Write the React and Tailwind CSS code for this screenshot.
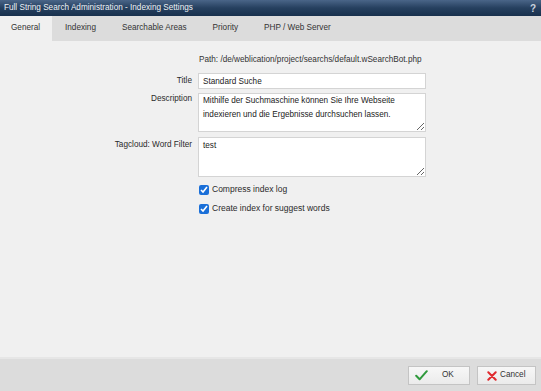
import React from "react";

const font = { fontFamily: '"Liberation Sans", Arial, sans-serif' };

function Row({ label, labelClass = "", className = "", children }) {
  return (
    <div className={"flex gap-[6px] " + className}>
      <div className={"w-[192px] shrink-0 text-right leading-[12px] " + labelClass}>{label}</div>
      {children}
    </div>
  );
}

function Check({ label, className = "" }) {
  return (
    <div className={"flex " + className}>
      <div className="w-[199px] shrink-0" />
      <label className="flex items-center gap-[3px] h-[13px] text-[8.5px]">
        <input type="checkbox" readOnly checked className="w-[10px] h-[10px] m-0 accent-[#1a6fd8]" />
        <span>{label}</span>
      </label>
    </div>
  );
}

export default function App() {
  return (
    <div
      className="w-[541px] h-[391px] flex flex-col bg-[#f0f0f0] text-[8.2px] text-[#2a2a2a] overflow-hidden"
      style={font}
    >
      {/* title bar */}
      <div className="h-[16px] shrink-0 flex items-center justify-between pl-[4px] pr-[5px] bg-gradient-to-b from-[#4a6588] via-[#26405f] to-[#18304d] text-[#eef2f6]">
        <span>Full String Search Administration - Indexing Settings</span>
        <span className="font-bold text-[10px] text-[#c9d3de]">?</span>
      </div>
      {/* tabs */}
      <div className="h-[25px] shrink-0 flex items-stretch bg-[#dcdcdc] text-[#333]">
        <div className="w-[52px] flex items-center pl-[11px] bg-[#f0f0f0]">General</div>
        <div className="flex items-center pl-[13px] gap-[26px]">
          <span>Indexing</span>
          <span>Searchable Areas</span>
          <span>Priority</span>
          <span>PHP / Web Server</span>
        </div>
      </div>
      {/* content */}
      <div className="flex-1 pt-[13px]">
        <div className="flex">
          <div className="w-[199px] shrink-0" />
          <div className="h-[12px] leading-[12px] text-[#333] whitespace-nowrap">
            Path: /de/weblication/project/searchs/default.wSearchBot.php
          </div>
        </div>

        <Row label="Title" className="mt-[7px] items-center">
          <input
            readOnly
            value="Standard Suche"
            className="h-[16px] w-[228px] bg-white border border-[#d4d4d4] px-[4px] text-[8.2px] text-[#222] outline-none"
            style={font}
          />
        </Row>

        <Row label="Description" className="mt-[4px] items-start">
          <textarea
            readOnly
            value="Mithilfe der Suchmaschine können Sie Ihre Webseite indexieren und die Ergebnisse durchsuchen lassen."
            className="block h-[39px] w-[228px] bg-white border border-[#d4d4d4] px-[4px] pt-[0px] pb-0 text-[8.2px] leading-[14px] text-[#222] outline-none resize-y"
            style={font}
          />
        </Row>

        <Row label="Tagcloud: Word Filter" labelClass="pt-[2px]" className="mt-[5px] items-start">
          <textarea
            readOnly
            value="test"
            className="block h-[40px] w-[228px] bg-white border border-[#d4d4d4] px-[4px] pt-[1px] pb-0 text-[8.2px] leading-[14px] text-[#222] outline-none resize-y"
            style={font}
          />
        </Row>

        <Check label="Compress index log" className="mt-[6px]" />
        <Check label="Create index for suggest words" className="mt-[6px]" />
      </div>
      {/* footer */}
      <div className="h-[34px] shrink-0 bg-[#dcdcdc] border-t-2 border-[#e6e6e6] flex items-center justify-end gap-[7px] pr-[5px] pt-[1px]">
        <button
          className="h-[19px] w-[62px] flex items-center pl-[6px] bg-gradient-to-b from-[#f7f7f7] to-[#ebebeb] border border-[#c4c4c4] text-[8.2px] text-[#333]"
          style={font}
        >
          <svg width="13" height="11" viewBox="0 0 13 11" className="shrink-0">
            <path d="M1.2 5.8 L4.6 9.3 L11.8 1.2" fill="none" stroke="#2f9a3c" strokeWidth="2" strokeLinecap="round" strokeLinejoin="round" />
          </svg>
          <span className="ml-[14px]">OK</span>
        </button>
        <button
          className="h-[19px] w-[59px] flex items-center pl-[9px] bg-gradient-to-b from-[#f7f7f7] to-[#ebebeb] border border-[#c4c4c4] text-[8.2px] text-[#333]"
          style={font}
        >
          <svg width="10" height="10" viewBox="0 0 10 10" className="shrink-0">
            <path d="M1.3 1.3 L8.7 8.7 M8.7 1.3 L1.3 8.7" fill="none" stroke="#e02a2e" strokeWidth="2" strokeLinecap="round" />
          </svg>
          <span className="ml-[3px]">Cancel</span>
        </button>
      </div>
    </div>
  );
}
